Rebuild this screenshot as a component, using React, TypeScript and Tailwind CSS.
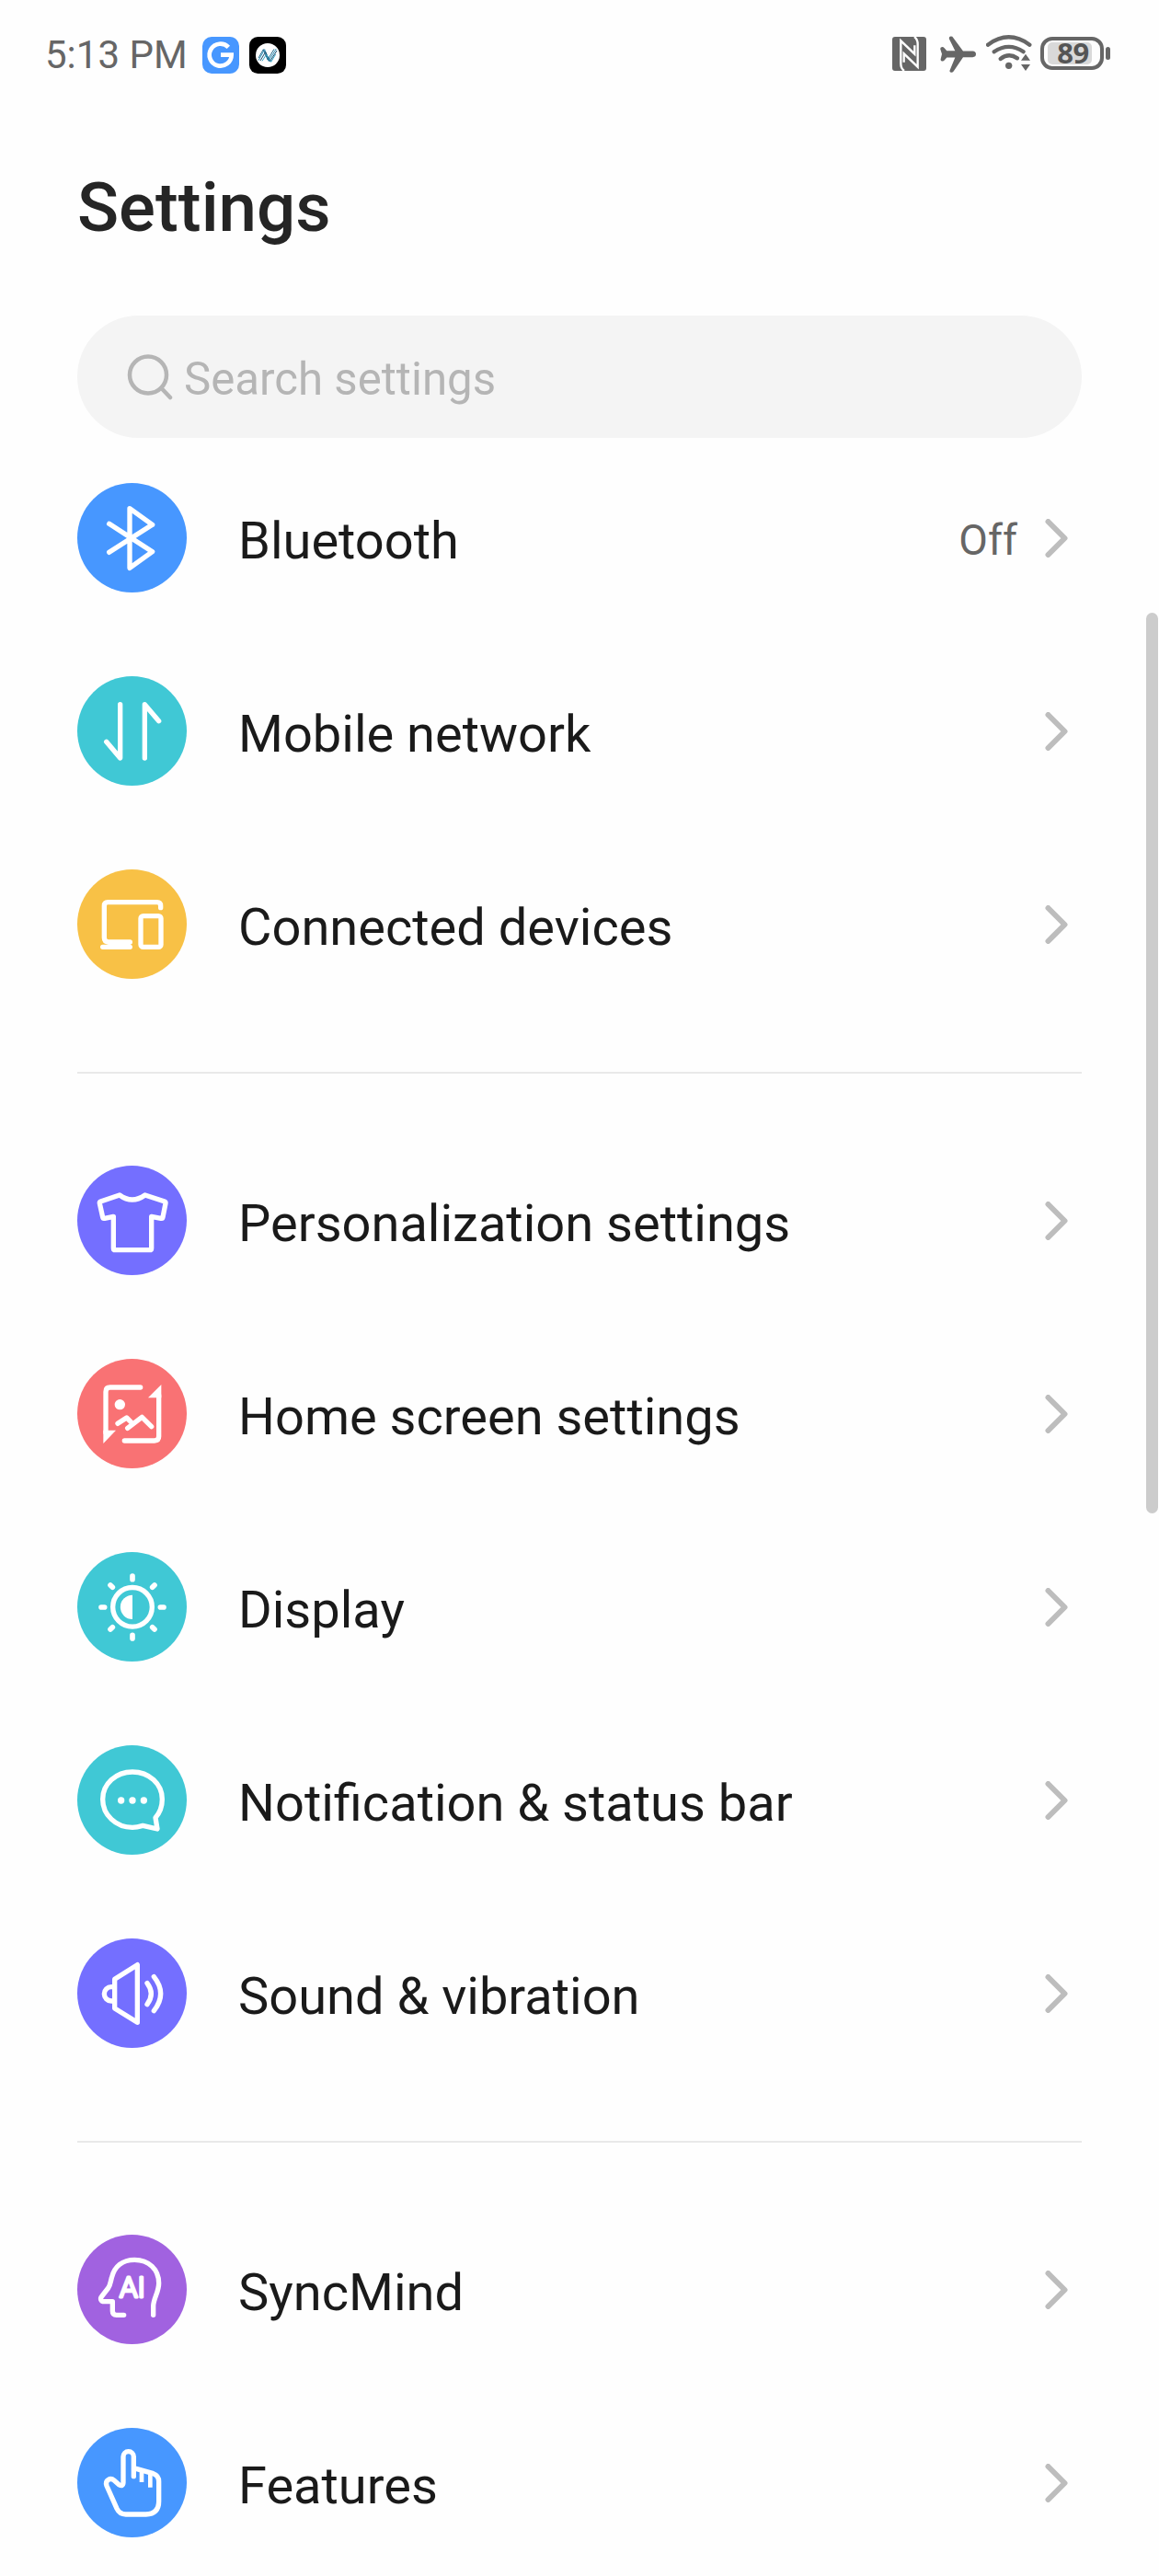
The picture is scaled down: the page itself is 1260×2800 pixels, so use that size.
import type { ReactNode } from "react";

type Item = { label: string; color: string; viewBox: string; icon: ReactNode; value?: string };

const connectivity: Item[] = [
  {
    label: "Bluetooth",
    color: "bg-[#4797ff]",
    viewBox: "42 45 357 357",
    value: "Off",
    icon: <path d="M146 178L287 269L213 322V128L287 181L146 271" />,
  },
  {
    label: "Mobile network",
    color: "bg-[#40c8d5]",
    viewBox: "42 675 357 357",
    icon: <path d="M137 889L182 942V767M262 942V767L308 821" />,
  },
  {
    label: "Connected devices",
    color: "bg-[#f8c146]",
    viewBox: "42 75 357 357",
    icon: (
      <>
        <path d="M314 200V194Q314 182 302 182H142Q130 182 130 194V298Q130 312 144 312H214M125 328H214" />
        <rect x="249" y="227" width="66" height="101" rx="8" />
      </>
    ),
  },
];

const appearance: Item[] = [
  {
    label: "Personalization settings",
    color: "bg-[#746fff]",
    viewBox: "42 51 357 357",
    icon: (
      <path d="M180 147Q221 177 263 147L325 167Q331 169 330 174L321 219Q320 224 315 223L284 217V320Q284 326 278 326H166Q160 326 160 320V217L131 223Q126 224 125 219L115 174Q114 169 120 167Z" />
    ),
  },
  {
    label: "Home screen settings",
    color: "bg-[#f97274]",
    viewBox: "42 51 357 357",
    icon: (
      <>
        <path d="M248 144H149Q135 144 135 158V292M308 170V304Q308 318 294 318H196M174 262L203 243L217 257M206 277L253 241L284 272" />
        <path d="M127 327L168 284H127ZM316 135L273 178H316Z" fill="white" stroke="none" />
        <circle cx="181" cy="200" r="17" fill="white" stroke="none" />
      </>
    ),
  },
  {
    label: "Display",
    color: "bg-[#40c8d5]",
    viewBox: "42 51 357 357",
    icon: (
      <>
        <circle cx="222" cy="230.500" r="64" />
        <path d="M222 191A39.500 39.500 0 0 0 222 270Z" fill="white" stroke="none" />
        <path
          strokeWidth="17"
          d="M222 129V140M222 322V333M120 231H131M313 231H324M150 159L157 166M294 159L287 166M150 303L157 296M294 303L287 296"
        />
      </>
    ),
  },
  {
    label: "Notification & status bar",
    color: "bg-[#40c8d5]",
    viewBox: "42 681 357 357",
    icon: (
      <>
        <path d="M303 954L297 917C312 900 319 880 319 857C319 807 276 768 222 768C168 768 125 807 125 857C125 908 168 949 222 949C236 949 246 946 256 943Z" />
        <g fill="white" stroke="none">
          <circle cx="185" cy="861" r="11" />
          <circle cx="222" cy="861" r="11" />
          <circle cx="259" cy="861" r="11" />
        </g>
      </>
    ),
  },
  {
    label: "Sound & vibration",
    color: "bg-[#746fff]",
    viewBox: "42 51 357 357",
    icon: (
      <path d="M238 137V325L164 279V184ZM163 209H153A23 23 0 0 0 153 255H163M270 197Q296 231 270 266M292 176Q336 231 292 287" />
    ),
  },
];

const extras: Item[] = [
  {
    label: "SyncMind",
    color: "bg-[#a162e0]",
    viewBox: "42 57 357 357",
    icon: (
      <>
        <path d="M194 319H170Q157 319 157 306V275H130C118 275 116 265 122 258L143 231C150 221 151 208 154 198C163 160 190 139 229 139C275 139 308 170 308 215C308 245 290 265 290 290V319" />
        <text
          x="180"
          y="262"
          className="font-light"
          fontFamily="Roboto, sans-serif"
          fontSize="94"
          fill="white"
          strokeWidth="9"
        >
          AI
        </text>
      </>
    ),
  },
  {
    label: "Features",
    color: "bg-[#4797ff]",
    viewBox: "42 687 357 357",
    icon: (
      <>
        <path d="M226 845V781A17 17 0 0 0 192 781V866Q191 880 178 872L162 858C150 848 131 858 138 876L171 950Q180 969 200 969H266Q308 967 308 926V862Q308 842 290 836L226 818" />
        <path strokeWidth="14" strokeLinecap="butt" d="M252 824V864M280 832V881" />
      </>
    ),
  },
];

function Row({ item }: { item: Item }) {
  return (
    <li className="flex h-[210px] items-center pr-[15px]">
      <span className={`mb-px size-[119px] shrink-0 rounded-full ${item.color}`}>
        <svg
          viewBox={item.viewBox}
          className="size-full"
          fill="none"
          stroke="white"
          strokeWidth="16"
          strokeLinecap="round"
          strokeLinejoin="round"
        >
          {item.icon}
        </svg>
      </span>
      <span className="ml-14 flex-1 pt-1.5 text-[56px] leading-none text-[#1a1a1a]">{item.label}</span>
      {item.value && (
        <span className="mr-[30px] pt-[3px] text-[46px] leading-none text-[#666666]">{item.value}</span>
      )}
      <svg
        viewBox="0 0 25 42"
        className="h-[42px] w-[25px]"
        fill="none"
        stroke="#bdbdbd"
        strokeWidth="6"
        strokeLinecap="round"
        strokeLinejoin="round"
      >
        <path d="M3.500 3L21.500 21L3.500 39" />
      </svg>
    </li>
  );
}

function Divider() {
  return <div className="my-[55px] h-0.5 bg-[#e9e9e9]" />;
}

function StatusBar() {
  return (
    <header className="flex h-[120px] items-center justify-between pl-[49px] pr-[53px]">
      <div className="flex items-center">
        <span className="w-[171px] whitespace-nowrap text-[42px] leading-none text-[#666666]">5:13 PM</span>
        <svg viewBox="570 60 120 120" className="size-10">
          <rect x="570" y="60" width="120" height="120" rx="30" fill="#4797ff" />
          <path d="M655 94A36 36 0 1 0 665 119H630" fill="none" stroke="white" strokeWidth="14" />
        </svg>
        <svg viewBox="724 60 120 120" className="ml-[11px] size-10">
          <rect x="724" y="60" width="120" height="120" rx="28" fill="black" />
          <circle cx="784" cy="120" r="39" fill="white" />
          <g fill="none" strokeWidth="3">
            <path d="M754 137L774 101L787 139L812 99" stroke="#2a8fb8" />
            <path d="M760 138L777 109L791 141L814 105" stroke="#174a6b" />
            <path d="M766 139L780 117L795 142L810 117" stroke="#36a5c6" />
            <path d="M754 129L770 101L784 135L805 100" stroke="#236b8c" />
          </g>
        </svg>
      </div>
      <div className="flex items-center">
        <svg viewBox="60 60 111 111" className="mb-[3px] size-[37px]">
          <rect x="60" y="60" width="111" height="111" rx="9" fill="#666666" />
          <path
            d="M99 171Q88 163 88 148V73L133 116V88M132 60Q143 68 143 84V158L98 115V143"
            fill="none"
            stroke="white"
            strokeWidth="7"
          />
        </svg>
        <svg viewBox="217 56 117 119" className="mb-[3px] ml-[15px] h-10 w-[39px]">
          <path
            d="M247 60Q250 55 257 58L292 105H323Q334 106 334 115Q334 125 323 125H292L261 171Q257 176 251 174Q247 172 249 167L266 126H239L231 135Q227 140 221 137Q218 135 219 131L223 115L218 99Q217 93 222 92Q227 91 231 95L239 104H266L247 66Q246 63 247 60Z"
            fill="#666666"
          />
        </svg>
        <svg viewBox="365 54 150 120" className="mb-1 ml-[11px] h-10 w-[50px]">
          <g fill="none" stroke="#666666" strokeWidth="13" strokeLinecap="round">
            <path d="M371 86Q439 36 507 86" />
            <path d="M391 109Q439 76 487 109" />
            <path d="M412 132Q439 111 467 130" />
          </g>
          <circle cx="439" cy="154" r="11" fill="#666666" />
          <path d="M494 110L516 140H472Z" fill="white" />
          <path d="M494 116L509 137H479ZM494 171L509 150H479Z" fill="#666666" />
        </svg>
        <div className="mb-[5px] ml-[9px] flex items-center">
          <div className="flex h-9 w-[69px] items-center rounded-[13px] border-4 border-[#666666] pl-1">
            <span className="flex h-6 w-12 items-center justify-center rounded-[5px] bg-[#d9d9d9] pl-[7px] font-['Noto_Sans'] text-[31px] font-bold leading-none tracking-[-0.5px] text-[#555555]">
              89
            </span>
          </div>
          <span className="ml-0.5 h-3.5 w-[5px] rounded-sm bg-[#666666]" />
        </div>
      </div>
    </header>
  );
}

export default function App() {
  return (
    <div className="relative h-[2800px] w-[1260px] overflow-hidden bg-[#fefefe] font-[Roboto,sans-serif]">
      <StatusBar />
      <main className="px-[84px]">
        <h1 className="flex h-[223px] items-start pt-[68px] text-[74.500px] font-medium leading-[76px] text-[#252525]">
          Settings
        </h1>
        <div className="flex h-[133px] items-center rounded-full bg-[#f4f4f4] pl-[54px]">
          <svg
            viewBox="0 0 50 50"
            className="size-[50px]"
            fill="none"
            stroke="#b5b5b5"
            strokeWidth="4.500"
            strokeLinecap="round"
          >
            <circle cx="23" cy="22.500" r="20" />
            <path d="M37.500 37L47 47" />
          </svg>
          <span className="ml-3 pt-1.5 text-[49.200px] leading-none text-[#b5b5b5]">Search settings</span>
        </div>
        <div className="pt-1">
          <ul>{connectivity.map((item) => <Row key={item.label} item={item} />)}</ul>
          <Divider />
          <ul>{appearance.map((item) => <Row key={item.label} item={item} />)}</ul>
          <Divider />
          <ul>{extras.map((item) => <Row key={item.label} item={item} />)}</ul>
        </div>
      </main>
      <div className="absolute right-px top-[666px] h-[979px] w-[13px] rounded-full bg-[#cccccc]" />
    </div>
  );
}
